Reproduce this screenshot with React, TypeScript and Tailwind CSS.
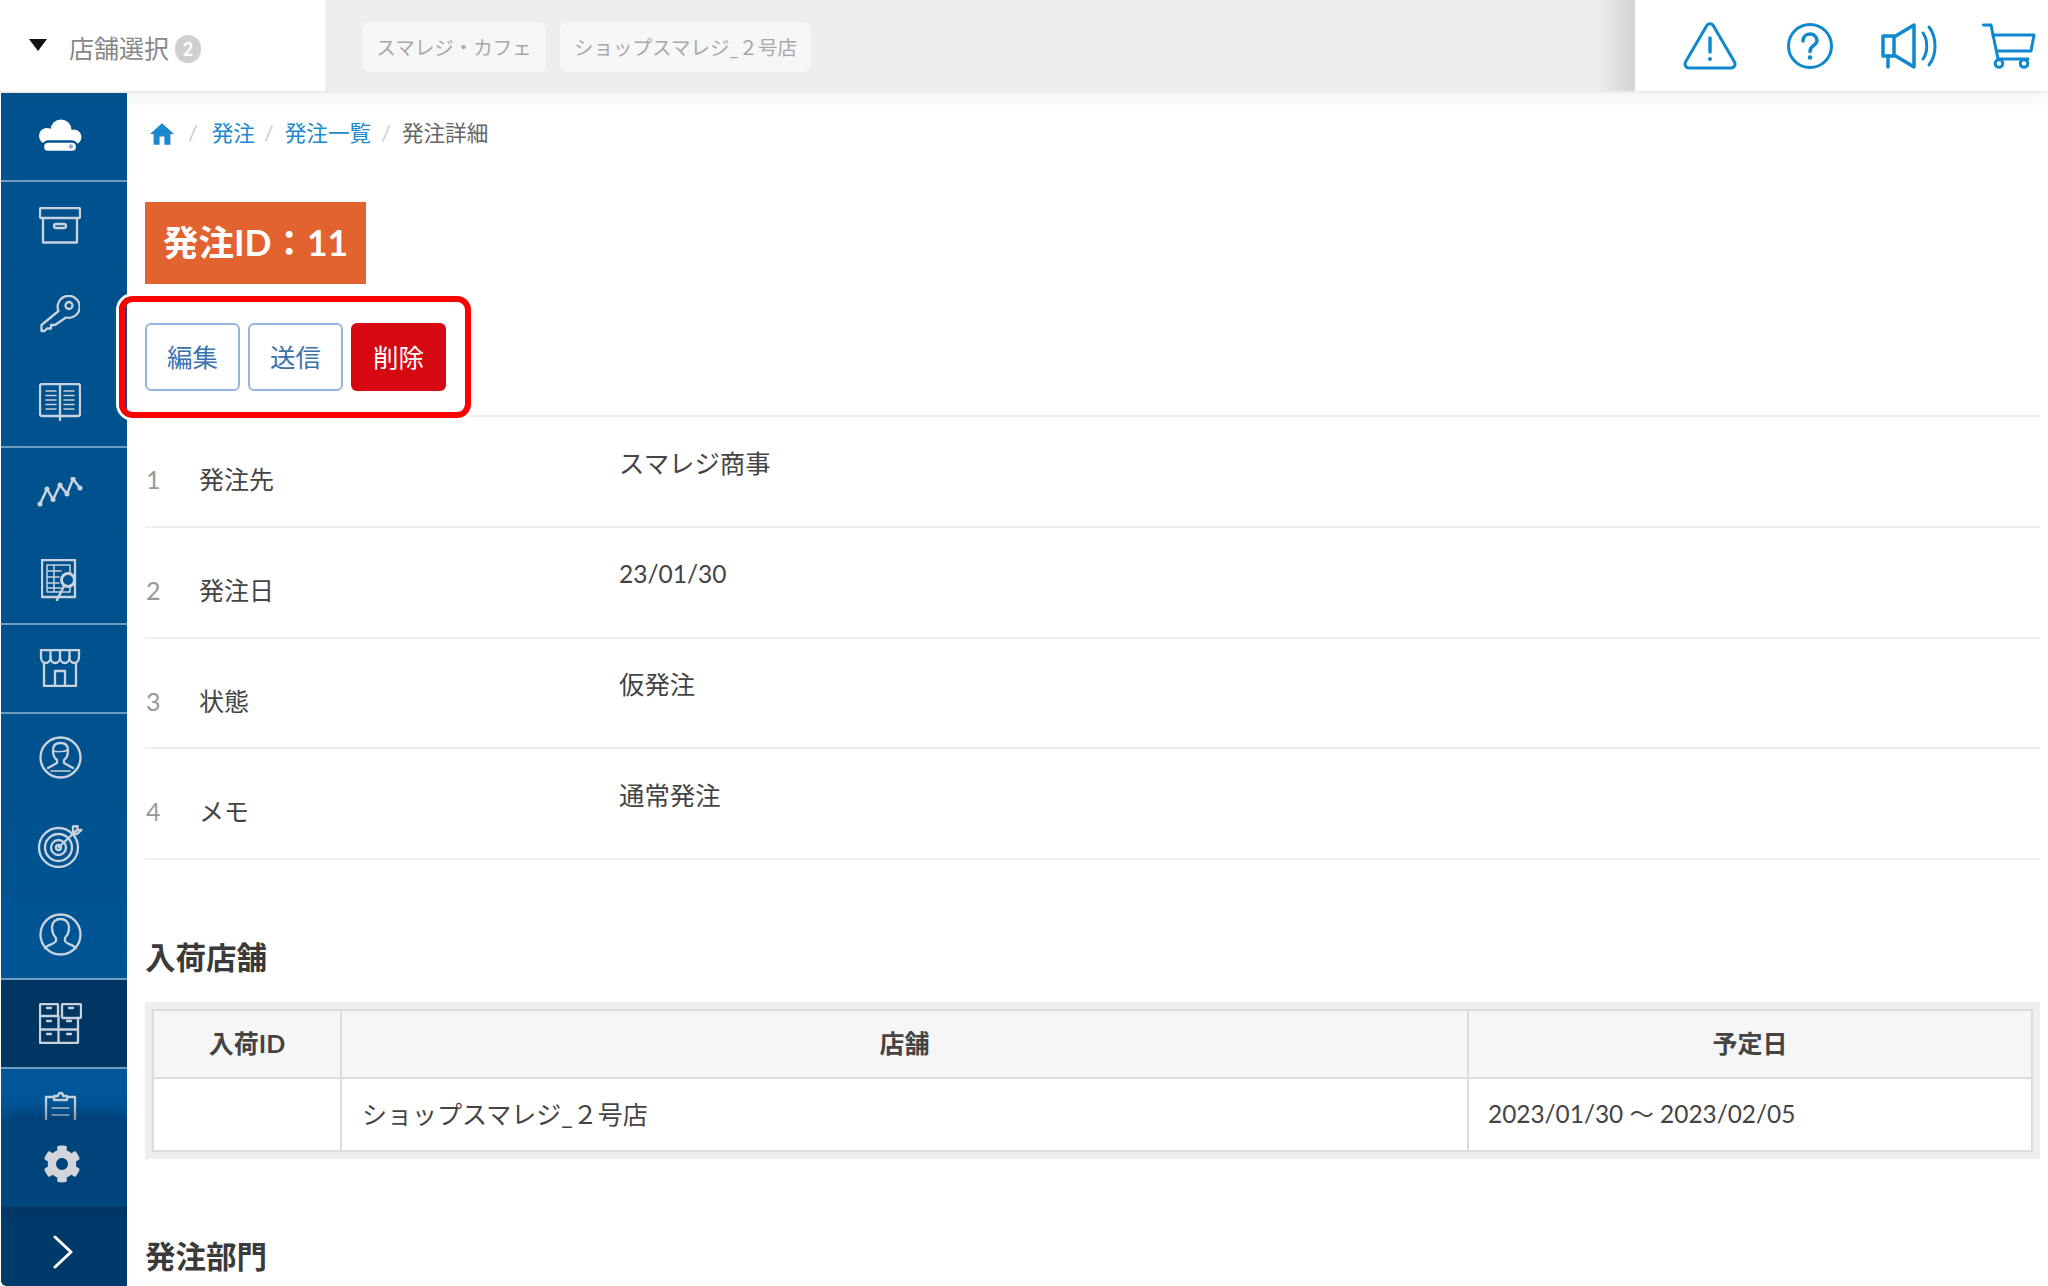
import { FaCog } from 'react-icons/fa';
import type { ReactNode } from 'react';

const Ico = ({ w, h, vb, children }: { w: number; h: number; vb: string; children: ReactNode }) => (
  <svg width={w} height={h} viewBox={vb} fill="none" stroke="currentColor" strokeWidth="2.300" strokeLinecap="round" strokeLinejoin="round">
    {children}
  </svg>
);

const sideIcons: ReactNode[] = [
  <Ico w={44} h={34} vb="0 0 44 34">
    <g fill="#fff" stroke="none">
      <circle cx="23" cy="11" r="10.500" />
      <circle cx="9" cy="17" r="8" />
      <circle cx="36" cy="18" r="7.500" />
      <rect x="9" y="12" width="27" height="10" />
    </g>
    <rect x="5" y="22.500" width="34" height="10.500" rx="5" fill="#fff" stroke="#00528f" />
    <circle cx="33" cy="27.500" r="2.200" fill="#8fb0d0" stroke="none" />
  </Ico>,
  <Ico w={42} h={37} vb="0 0 42 37">
    <rect x="1" y="1" width="40" height="10" rx="1" />
    <path d="M4 11v24.500h34V11" />
    <rect x="15" y="17" width="12" height="4" rx="2" />
  </Ico>,
  <Ico w={40} h={38} vb="0 0 40 38">
    <path d="M18.500 16A11 11 0 1 1 26 22.500L15 30H11V33.500H7L4.500 36H1.500V30Z" />
    <circle cx="29" cy="10.500" r="3.500" />
  </Ico>,
  <Ico w={42} h={38} vb="0 0 42 38">
    <rect x="1" y="1" width="40" height="32" rx="2" />
    <path d="M21 1v36" />
    <path d="M7 8h10M7 12.500h10M7 17h10M7 21.500h10M7 26h10M25 8h10M25 12.500h10M25 17h10M25 21.500h10M25 26h10" strokeWidth="1.500" />
  </Ico>,
  <Ico w={46} h={30} vb="0 0 46 30">
    <path d="M3 27L10 12L16 22.500L23 8L30 17L36 2L43 11" strokeWidth="2.500" />
    <g fill="currentColor" stroke="none">
      <circle cx="3" cy="27" r="2.500" />
      <circle cx="10" cy="12" r="2.500" />
      <circle cx="16" cy="22.500" r="2.500" />
      <circle cx="23" cy="8" r="2.500" />
      <circle cx="30" cy="17" r="2.500" />
      <circle cx="36" cy="2" r="2.500" />
      <circle cx="43" cy="11" r="2.500" />
    </g>
  </Ico>,
  <Ico w={38} h={42} vb="0 0 38 42">
    <rect x="1" y="1" width="33" height="37" />
    <path d="M6 6h23v27H6z M6 12h14M6 18h12M6 24h12M6 29h14M13 6v27" strokeWidth="1.500" />
    <circle cx="27" cy="21" r="6.500" fill="#00528f" strokeWidth="3" />
    <path d="M23 27L16 41" strokeWidth="2.500" />
  </Ico>,
  <Ico w={42} h={38} vb="0 0 42 38">
    <path d="M2 1h38v7c0 8-9.500 8-9.500 0 0 8-9.500 8-9.500 0 0 8-9.500 8-9.500 0 0 8-9.500 8-9.500 0z" />
    <path d="M11.500 1v7M21 1v7M30.500 1v7" />
    <path d="M5 14v23h32V14" />
    <path d="M16 37V22h10v15" />
  </Ico>,
  <Ico w={43} h={43} vb="0 0 43 43">
    <circle cx="21.500" cy="21.500" r="20" />
    <path d="M14 14c0-5 3-7 7.500-7s7.500 2 7.500 7c0 4-1 8-4 10v3l9 5M14 14c0 4 1 8 4 10v3l-9 5" />
    <path d="M14 15c4 1 11 1 15-1M12 35h19" strokeWidth="1.500" />
  </Ico>,
  <Ico w={46} h={43} vb="0 0 46 43">
    <circle cx="21.500" cy="22.500" r="19.500" />
    <circle cx="21.500" cy="22.500" r="13.500" />
    <circle cx="21.500" cy="22.500" r="7.500" />
    <circle cx="21.500" cy="22.500" r="2.500" />
    <path d="M22 22L40 5M36 5V1.500L40.500 1V5H44.500L40 9H36Z" />
  </Ico>,
  <Ico w={43} h={43} vb="0 0 43 43">
    <circle cx="21.500" cy="21.500" r="20" />
    <path d="M6 35c2-3 10-4 11-7v-3c-3-3-4-8-4-11 0-5 4-8 8.500-8s8.500 3 8.500 8c0 3-1 8-4 11v3c1 3 9 4 11 7" />
  </Ico>,
  <Ico w={43} h={41} vb="0 0 43 41">
    <rect x="1" y="1" width="18" height="12" rx="1" />
    <rect x="23" y="1" width="19" height="14" rx="1" />
    <path d="M1 13v26a1 1 0 0 0 1 1h36a1 1 0 0 0 1-1V15M1 26.500h38M19.500 13v27" />
    <path d="M8 5h4M30 5h4M8 18h4M28 18h4M8 31h4M28 31h4" />
  </Ico>,
  <Ico w={33} h={42} vb="0 0 33 42">
    <path d="M10 6H2v34h29V6h-8" />
    <path d="M10 9V5h4c0-4 5-4 5 0h4v4z" />
    <path d="M8 17h17M8 24h17M8 31h17" strokeWidth="1.500" />
  </Ico>,
];

const rows = [
  { no: '1', label: '発注先', value: 'スマレジ商事', cls: 'mt-[27px] text-[25.400px]' },
  { no: '2', label: '発注日', value: '23/01/30', cls: 'mt-[28px] text-[24.500px]' },
  { no: '3', label: '状態', value: '仮発注', cls: 'mt-[26px] text-[25.400px]' },
  { no: '4', label: 'メモ', value: '通常発注', cls: 'mt-[27px] text-[25.400px]' },
];

const Chip = ({ w, children }: { w: string; children: ReactNode }) => (
  <span className={`${w} flex h-[50px] items-center justify-center rounded-lg bg-[#f7f7f7] pt-[2px] text-[19.500px] text-[#a8a8a8]`}>{children}</span>
);

export default function App() {
  return (
    <div className="relative flex h-[1286px] w-[2048px] flex-col overflow-hidden bg-white font-['Lato','Noto_Sans_CJK_JP',sans-serif] text-[25px] text-[#444]">
      {/* top bar */}
      <header className="relative z-20 flex h-[93px] shrink-0 border-b-2 border-[#ececec] bg-white shadow-[0_6px_18px_rgba(0,0,0,0.05)]">
        <div className="flex w-[325px] shrink-0 items-center pl-[29px] pt-[7px]">
          <svg width="18" height="12" viewBox="0 0 18 12" className="-mt-[9px]"><polygon points="0,0 18,0 9,12" fill="#111" /></svg>
          <span className="ml-[22px] text-[#888]">店舗選択</span>
          <span className="ml-[6px] flex h-[28px] w-[26px] items-center justify-center rounded-full bg-[#cfcfcf] text-[18px] font-bold text-white">2</span>
        </div>
        <div className="flex w-[1310px] shrink-0 items-start gap-[14px] bg-[linear-gradient(to_right,#eeeeee_97%,#d4d4d4_100%)] pl-[37px] pt-[22px]">
          <Chip w="w-[184px]">スマレジ・カフェ</Chip>
          <Chip w="w-[251px]">ショップスマレジ_２号店</Chip>
        </div>
        <div className="flex flex-1 items-center text-[#0f88d0]">
          <div className="ml-[48px]">
            <Ico w={54} h={48} vb="0 0 54 48">
              <path d="M23.500 4L2.500 40c-1.500 3 .5 6 3.500 6h42c3 0 5-3 3.500-6L30.500 4c-1.500-3-5.500-3-7 0z" strokeWidth="3" />
              <path d="M27 16v14" strokeWidth="3.500" />
              <circle cx="27" cy="37" r="2" fill="currentColor" stroke="none" />
            </Ico>
          </div>
          <div className="ml-[50px]">
            <Ico w={46} h={46} vb="0 0 46 46">
              <circle cx="23" cy="23" r="21.500" strokeWidth="3" />
              <path d="M16 18c0-4 3-7 7-7s7 3 7 6.500c0 5-7 5-7 11" strokeWidth="3.500" />
              <circle cx="23" cy="34.500" r="2.300" fill="currentColor" stroke="none" />
            </Ico>
          </div>
          <div className="ml-[47px]">
            <Ico w={59} h={46} vb="0 0 59 46">
              <path d="M3 13h11v20H3zM14 14L34 2v42L14 32" strokeWidth="3.500" />
              <path d="M8 33v11" strokeWidth="3.500" />
              <path d="M43 10c5 7 5 19 0 26M49 4c8 10 8 28 0 38" strokeWidth="3" />
            </Ico>
          </div>
          <div className="ml-[43px]">
            <Ico w={54} h={46} vb="0 0 54 46">
              <path d="M1.500 2H9l7 34h30" strokeWidth="3" />
              <path d="M11 12h41l-3 16H15" strokeWidth="3" />
              <circle cx="17" cy="40.500" r="3.800" strokeWidth="3" />
              <circle cx="42" cy="40.500" r="3.800" strokeWidth="3" />
            </Ico>
          </div>
        </div>
      </header>

      <div className="flex min-h-0 flex-1">
        {/* side menu */}
        <aside className="relative z-10 -mt-[2px] ml-px flex w-[126px] shrink-0 flex-col overflow-hidden rounded-bl-md border-t-2 border-[#6f9cc0] bg-[linear-gradient(to_bottom,#00528f_60%,#00589c_90%)] text-[#c8d3de]">
          <div className="min-h-0 flex-1 overflow-hidden">
            {sideIcons.map((icon, i) => (
              <div
                key={i}
                className={`flex h-[88.700px] items-center justify-center pr-[8px] ${i === 10 ? 'bg-[#003661]' : ''} ${
                  [0, 3, 5, 6, 9, 10].includes(i) ? 'border-b-2 border-[#6f9cc0]' : 'border-b border-[#004c85]'
                }`}
              >
                {icon}
              </div>
            ))}
          </div>
          <div className="relative flex h-[87px] shrink-0 items-center justify-center bg-[#00447c] pr-[4px] text-[#d2d6da] shadow-[0_-8px_16px_rgba(0,20,50,0.35),8px_0_16px_rgba(0,0,0,0.1)]">
            <FaCog size={38} />
          </div>
          <div className="flex h-[79px] shrink-0 items-center justify-center bg-[#003a6b] pr-[3px] pt-[10px]">
            <Ico w={22} h={34} vb="0 0 22 34">
              <path d="M3 2L19 17L3 32" stroke="#fff" strokeWidth="3" />
            </Ico>
          </div>
        </aside>

        {/* content */}
        <main className="relative z-[15] min-w-0 flex-1 pl-[18px] pr-[8px]">
          <nav className="flex h-[81px] items-center gap-[14px] pl-[5px] text-[21.600px] text-[#1a88cf]">
            <svg width="24" height="24" viewBox="2 3 20 18" fill="currentColor"><path d="M10 21v-7h4v7h5v-9h3L12 3 2 12h3v9z" /></svg>
            <span className="text-[#ccc]">/</span>
            <span>発注</span>
            <span className="-ml-[5px] text-[#ccc]">/</span>
            <span className="-ml-[3px]">発注一覧</span>
            <span className="-ml-[4px] text-[#ccc]">/</span>
            <span className="-ml-[3px] text-[#666]">発注詳細</span>
          </nav>

          <h1 className="mt-[28px] flex h-[82px] w-[221px] items-center justify-center bg-[#e26330] text-[35.500px] font-bold text-white">発注ID：11</h1>

          <div className="relative flex h-[133px] gap-[8px] border-b-2 border-[#eeeeee] pt-[39px]">
            <button className="h-[68px] w-[95px] rounded-md border-2 border-[#93b6de] text-[25.500px] text-[#3a72b0]">編集</button>
            <button className="h-[68px] w-[95px] rounded-md border-2 border-[#93b6de] text-[25.500px] text-[#3a72b0]">送信</button>
            <button className="h-[68px] w-[95px] rounded-md bg-[#d60812] text-[25.500px] text-white">削除</button>
            {/* annotation over the buttons */}
            <div className="pointer-events-none absolute left-[-26px] top-[12px] h-[122px] w-[352px] rounded-[14px] border-[6px] border-[#ff0000] shadow-[0_0_0_3px_#fff]" />
          </div>

          {rows.map((r) => (
            <div key={r.no} className="flex h-[110.800px] border-b-2 border-[#eeeeee]">
              <span className="mt-[44px] w-[54px] shrink-0 pl-px text-[#999]">{r.no}</span>
              <span className="mt-[44px] w-[420px] shrink-0">{r.label}</span>
              <span className={r.cls}>{r.value}</span>
            </div>
          ))}

          <h2 className="mt-[77px] text-[30.500px] font-bold leading-[40px] text-[#3a3a3a]">入荷店舗</h2>

          <div className="mt-[25px] bg-[#eeeeee] p-[7px]">
            <table className="w-full table-fixed border-collapse bg-white">
              <thead>
                <tr className="h-[68px] bg-[#f6f6f6] font-bold">
                  <th className="w-[188px] border-2 border-[#dcdcdc]">入荷ID</th>
                  <th className="w-[1127px] border-2 border-[#dcdcdc]">店舗</th>
                  <th className="border-2 border-[#dcdcdc]">予定日</th>
                </tr>
              </thead>
              <tbody>
                <tr className="h-[73px]">
                  <td className="border-2 border-[#dcdcdc]"></td>
                  <td className="border-2 border-[#dcdcdc] pl-[20px]">ショップスマレジ_２号店</td>
                  <td className="border-2 border-[#dcdcdc] pl-[19px] text-[24.400px]">2023/01/30 〜 2023/02/05</td>
                </tr>
              </tbody>
            </table>
          </div>

          <h2 className="mt-[77px] text-[30.500px] font-bold leading-[40px] text-[#3a3a3a]">発注部門</h2>
        </main>
      </div>
    </div>
  );
}
